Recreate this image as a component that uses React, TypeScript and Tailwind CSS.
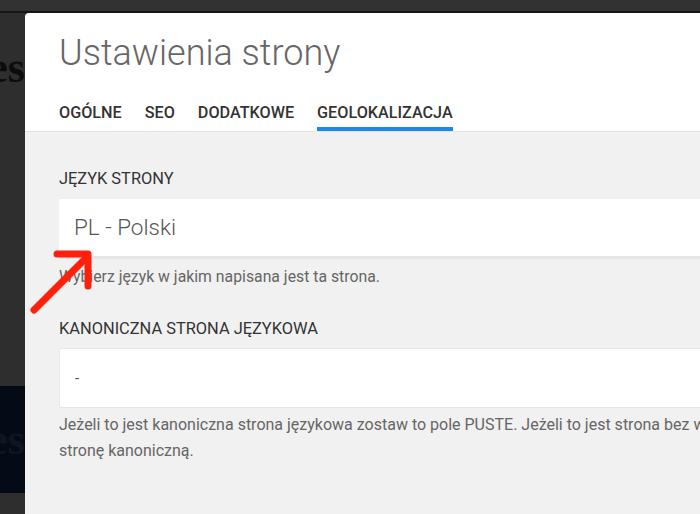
export default function App() {
  const tabs = ["OGÓLNE", "SEO", "DODATKOWE", "GEOLOKALIZACJA"];
  const active = "GEOLOKALIZACJA";

  return (
    <div className="relative flex h-[514px] w-[700px] flex-col overflow-hidden bg-[#2e2e2e] font-['Roboto',sans-serif]">
      {/* Top bar of the page underneath */}
      <div className="h-[11px] shrink-0 bg-[#323232]" />
      <div className="h-[2px] shrink-0 bg-[#141414]" />

      <div className="flex min-h-0 flex-1">
        {/* Page behind the modal */}
        <div className="flex w-[25px] shrink-0 flex-col overflow-hidden">
          <div className="mt-[30px] flex h-[50px] justify-end">
            <span className="font-['Liberation_Serif',serif] text-[44px] leading-[50px] font-bold text-[#0c0c0c]">
              es
            </span>
          </div>
          <div className="mt-[293px] flex h-[107px] items-center justify-end bg-[#050b16]">
            <span className="font-['Liberation_Serif',serif] text-[44px] leading-[50px] font-bold text-[#0e1622]">
              es
            </span>
          </div>
        </div>

        {/* Modal */}
        <div className="flex w-[900px] shrink-0 flex-col rounded-tl-[4px] bg-white">
          <div className="border-b border-[#e3e3e3] px-[34px]">
            <h1 className="pt-[18px] text-[36px] leading-[44px] font-light text-[#666]">
              Ustawienia strony
            </h1>
            <div className="mt-[27px] flex gap-[23px]">
              {tabs.map((t) => (
                <div
                  key={t}
                  className={
                    t === active
                      ? "border-b-[4px] border-[#1e88e5] pt-[1px] pb-[4px] text-[16.2px] leading-[20px] font-medium text-[#333]"
                      : "border-b-[4px] border-transparent pt-[1px] pb-[4px] text-[16.2px] leading-[20px] font-medium text-[#333]"
                  }
                >
                  {t}
                </div>
              ))}
            </div>
          </div>

          <div className="flex-1 bg-[#f1f1f1] px-[34px] pt-[37px]">
            <label className="block text-[16.4px] leading-[20px] text-[#333]">
              JĘZYK STRONY
            </label>
            <div className="mt-[10px] flex h-[60px] items-center border-b-[3px] border-[#e6e6e6] bg-white px-[15px] text-[22.5px] font-light text-[#555]">
              PL - Polski
            </div>
            <p className="mt-[8px] text-[15.8px] leading-[20px] text-[#666]">
              Wybierz język w jakim napisana jest ta strona.
            </p>

            <label className="mt-[32px] block text-[16.4px] leading-[20px] text-[#333]">
              KANONICZNA STRONA JĘZYKOWA
            </label>
            <div className="mt-[9px] flex h-[60px] items-center rounded-[2px] border border-[#e8e8e8] bg-white px-[15px] text-[15px] text-[#555]">
              -
            </div>
            <p className="mt-[4px] text-[16px] leading-[26px] text-[#666]">
              Jeżeli to jest kanoniczna strona językowa zostaw to pole PUSTE. Jeżeli to jest strona bez wersji
              <br />
              stronę kanoniczną.
            </p>
          </div>
        </div>
      </div>

      {/* Red annotation arrow */}
      <svg
        className="pointer-events-none absolute top-0 left-0"
        width="700"
        height="514"
        viewBox="0 0 700 514"
      >
        <g stroke="#ff200c" strokeWidth="7" strokeLinecap="round" fill="none">
          <path d="M34 310 L87 257" />
          <path d="M57 254 L88 254 L88 286" strokeLinejoin="round" />
        </g>
      </svg>
    </div>
  );
}
